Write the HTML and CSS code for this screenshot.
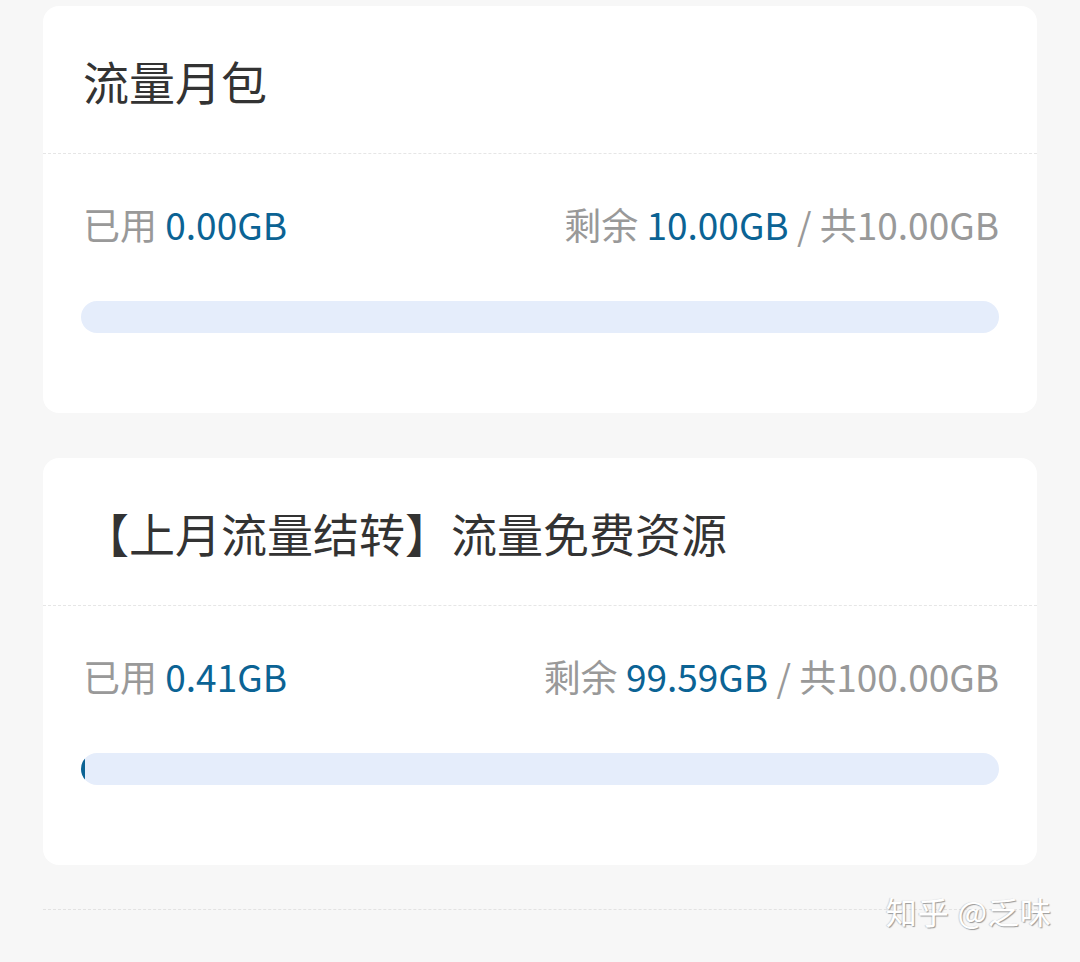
FILE: index.html
```html
<!DOCTYPE html>
<html lang="zh-CN">
<head>
    <meta charset="UTF-8">
    <meta name="viewport" content="width=device-width, initial-scale=1.0">
    <title>流量包</title>
    <link rel="stylesheet" href="styles.css">
</head>
<body>
    <div class="page">
        <div class="card">
            <div class="card-title">流量月包</div>
            <div class="card-body">
                <div class="usage">
                    <span class="used">已用 <b>0.00GB</b></span>
                    <span class="left">剩余 <b>10.00GB</b> / 共10.00GB</span>
                </div>
                <div class="bar"><div class="bar-fill" style="width: 0%"></div></div>
            </div>
        </div>

        <div class="card">
            <div class="card-title">【上月流量结转】流量免费资源</div>
            <div class="card-body">
                <div class="usage">
                    <span class="used">已用 <b>0.41GB</b></span>
                    <span class="left">剩余 <b>99.59GB</b> / 共100.00GB</span>
                </div>
                <div class="bar"><div class="bar-fill" style="width: 0.41%"></div></div>
            </div>
        </div>

        <div class="bottom-line"></div>
    </div>
    <div class="watermark">知乎 @乏味</div>
</body>
</html>
```

FILE: styles.css
```css
body {
    font-family: "Noto Sans CJK SC", "Noto Sans", sans-serif;
    margin: 0;
    padding: 0;
    background-color: #f7f7f7;
    height: 962px;
    overflow: hidden;
    position: relative;
}

.page {
    padding: 6px 43px 0;
}

.card {
    background-color: #ffffff;
    border-radius: 16px;
    margin-bottom: 45px;
}

.card-title {
    padding: 51px 40px 50px;
    font-size: 46px;
    line-height: 46px;
    color: #333333;
    border-bottom: 1px dashed #e6e6e6;
}

.card-body {
    padding: 52px 38px 80px;
}

.usage {
    display: flex;
    justify-content: space-between;
    font-size: 37px;
    line-height: 36px;
    color: #999999;
    padding-left: 2px;
    margin-bottom: 59px;
}

.usage b {
    font-weight: normal;
    color: #0b6394;
}

.bar {
    height: 32px;
    border-radius: 16px;
    background-color: #e5edfb;
    overflow: hidden;
}

.bar-fill {
    height: 100%;
    background-color: #0b6394;
    border-radius: 16px;
}

.bottom-line {
    margin-top: -1px;
    border-top: 1px dashed #e2e2e2;
}

.watermark {
    position: absolute;
    right: 28px;
    top: 891px;
    font-size: 31px;
    line-height: 40px;
    color: #ffffff;
    text-shadow: 1px 1px 1px #9a9a9a, -1px 0 1px rgba(0, 0, 0, 0.15);
    letter-spacing: 1px;
}
```
